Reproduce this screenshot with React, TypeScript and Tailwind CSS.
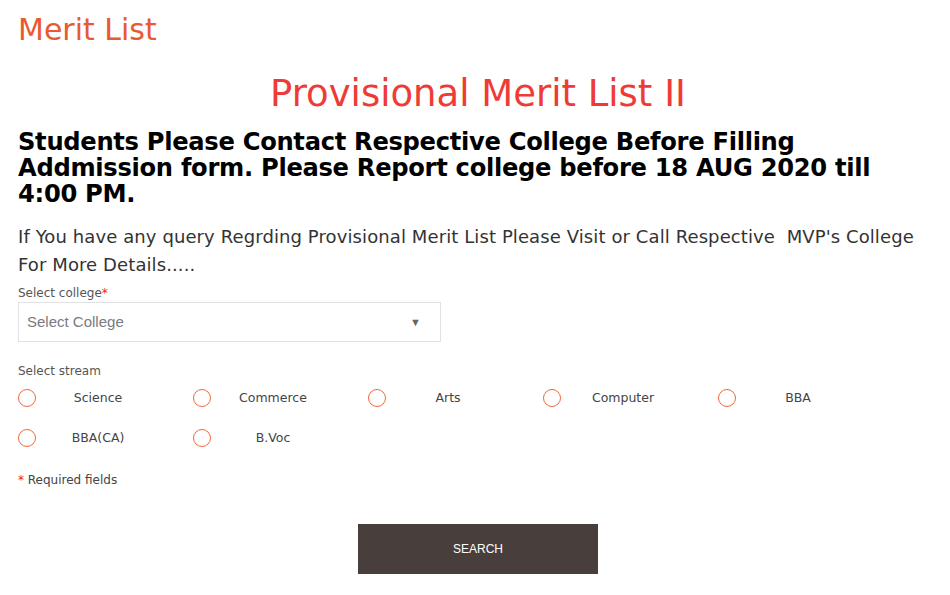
import React from "react";

const streams = ["Science", "Commerce", "Arts", "Computer", "BBA", "BBA(CA)", "B.Voc"];

function Radio({ label }: { label: string }) {
  return (
    <label className="flex items-center w-[175px] h-10 cursor-pointer">
      <span className="w-[18px] h-[18px] rounded-full border-[1.5px] border-[#ef6a3a] bg-white shrink-0" />
      <span className="w-[124px] text-center text-[12.5px] text-[#444]">{label}</span>
    </label>
  );
}

export default function App() {
  return (
    <div className="min-h-[595px] bg-white pl-[18px] pr-[12px] pt-[10px] font-['DejaVu_Sans',Verdana,sans-serif]">
      <h1 className="text-[30px] leading-[40px] text-[#e95a2f]">Merit List</h1>
      <h2 className="mt-[22px] text-center text-[37px] leading-[44px] text-[#ef3b35]">Provisional Merit List II</h2>
      <p className="mt-[13px] max-w-[890px] text-[24.2px] leading-[26px] font-bold text-black tracking-[-0.3px]">
        Students Please Contact Respective College Before Filling Addmission form. Please Report college before 18 AUG 2020 till 4:00 PM.
      </p>
      <p className="mt-[16px] text-[18px] leading-[28px] text-[#333] tracking-[0.1px]">
        If You have any query Regrding Provisional Merit List Please Visit or Call Respective&nbsp; MVP's College For More Details.....
      </p>
      <div className="mt-[7px] text-[12px] leading-[14px] text-[#555]">
        Select college<span className="text-[#e22]">*</span>
      </div>
      <div className="mt-[2px] w-[423px] h-[40px] border border-[#e2e2e6] flex items-center justify-between pl-[8px] pr-[19px] font-['Liberation_Sans',Arial,sans-serif] text-[15px] text-[#7a7a80]">
        <span>Select College</span>
        <span className="text-[11px] text-[#666]">▼</span>
      </div>
      <div className="mt-[22px] text-[12px] leading-[14px] text-[#555]">Select stream</div>
      <div className="mt-[0px] flex flex-wrap">
        {streams.map((s) => (
          <Radio key={s} label={s} />
        ))}
      </div>
      <div className="mt-[15px] text-[12px] leading-[14px] text-[#444]">
        <span className="text-[#e22]">*</span> Required fields
      </div>
      <div className="mt-[37px] flex justify-center">
        <button className="w-[240px] h-[50px] bg-[#483e3b] text-white text-[12px] font-['Liberation_Sans',Arial,sans-serif]">
          SEARCH
        </button>
      </div>
    </div>
  );
}
